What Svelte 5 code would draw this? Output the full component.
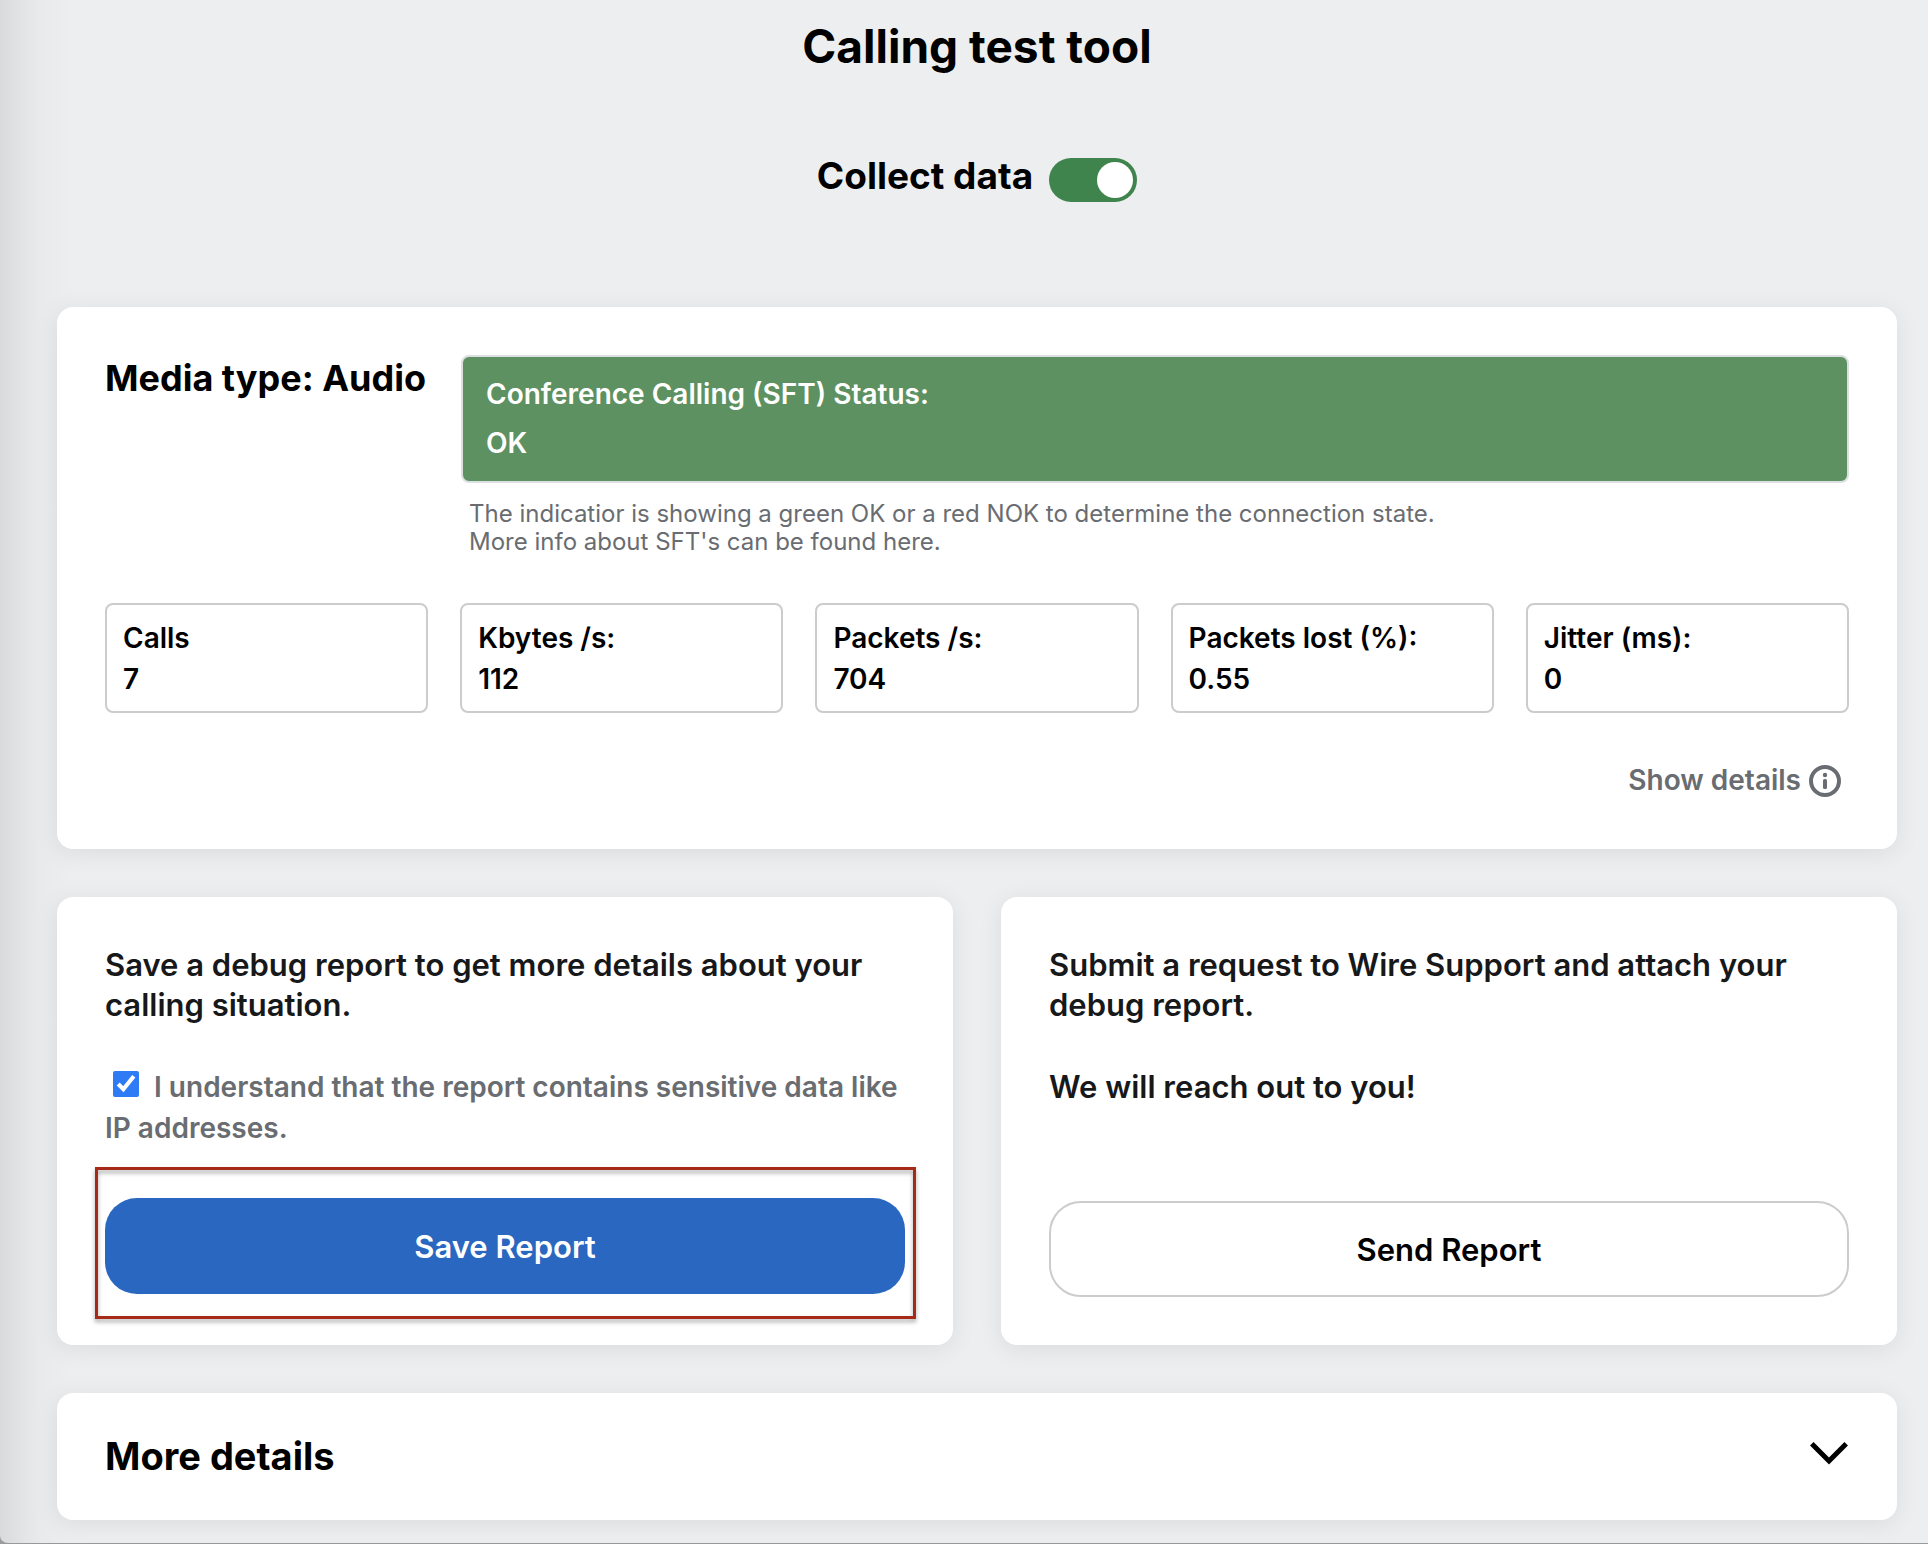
<script lang="ts">
	interface Metric {
		label: string;
		value: string;
	}

	let collecting = $state(true);
	let understood = $state(true);

	const metrics: Metric[] = [
		{ label: 'Calls', value: '7' },
		{ label: 'Kbytes /s:', value: '112' },
		{ label: 'Packets /s:', value: '704' },
		{ label: 'Packets lost (%):', value: '0.55' },
		{ label: 'Jitter (ms):', value: '0' }
	];
</script>

<main class="page">
	<h1>Calling test tool</h1>

	<label class="collect">
		<span>Collect data</span>
		<input class="switch" type="checkbox" role="switch" bind:checked={collecting} />
	</label>

	<section class="card">
		<div class="media">
			<h2>Media type: Audio</h2>
			<div class="media-status">
				<div class="status">
					<div>Conference Calling (SFT) Status:</div>
					<div>OK</div>
				</div>
				<p class="hint">
					The indicatior is showing a green OK or a red NOK to determine the connection state.<br />
					More info about SFT's can be found <a href="#sft">here</a>.
				</p>
			</div>
		</div>

		<div class="metrics">
			{#each metrics as metric}
				<div class="metric">
					<div>{metric.label}</div>
					<div>{metric.value}</div>
				</div>
			{/each}
		</div>

		<button class="show-details" type="button">
			Show details
			<svg width="32" height="32" viewBox="0 0 32 32" aria-hidden="true">
				<circle cx="16" cy="16" r="14" fill="none" stroke="currentColor" stroke-width="4" />
				<circle cx="16" cy="10" r="2.2" fill="currentColor" />
				<rect x="14" y="14" width="4" height="10" rx="1.6" fill="currentColor" />
			</svg>
		</button>
	</section>

	<div class="reports">
		<section class="card report">
			<p class="lead">Save a debug report to get more details about your calling situation.</p>
			<label class="consent">
				<input type="checkbox" bind:checked={understood} />
				I understand that the report contains sensitive data like IP addresses.
			</label>
			<div class="marked">
				<button class="btn primary" type="button">Save Report</button>
			</div>
		</section>

		<section class="card report">
			<p class="lead">Submit a request to Wire Support and attach your debug report.</p>
			<p class="lead">We will reach out to you!</p>
			<button class="btn outline" type="button">Send Report</button>
		</section>
	</div>

	<section class="card more">
		<button class="more-toggle" type="button" aria-expanded="false">
			More details
			<svg width="40" height="24" viewBox="0 0 40 24" aria-hidden="true">
				<path d="M2.8 1.8 L20 19 L37.2 1.8" fill="none" stroke="currentColor" stroke-width="5" />
			</svg>
		</button>
	</section>
</main>

<style>
	:global(html) {
		background: #9b9b9c;
	}

	:global(body) {
		margin: 0;
	}

	.page {
		box-sizing: border-box;
		min-height: 100vh;
		padding: 18px 31px 23px 57px;
		border-bottom: 1px solid #999;
		border-bottom-left-radius: 8px;
		background: linear-gradient(90deg, #d9dadb 0, #e2e3e5 20px, #e9eaec 40px, #edeef0 76px);
		color: #000;
		font-family: Inter, 'Liberation Sans', sans-serif;
		font-size: 28px;
		font-weight: 600;
		line-height: 41px;
	}

	h1,
	h2,
	p {
		margin: 0;
	}

	h1 {
		font-size: 46px;
		font-weight: 700;
		line-height: 56px;
		text-align: center;
	}

	button {
		padding: 0;
		border: none;
		background: none;
		color: inherit;
		font: inherit;
		cursor: pointer;
	}

	.collect {
		display: flex;
		justify-content: center;
		align-items: flex-end;
		gap: 16px;
		margin: 76px 0 105px;
		font-size: 37px;
		font-weight: 700;
		line-height: 52px;
	}

	.switch {
		appearance: none;
		display: flex;
		box-sizing: border-box;
		width: 88px;
		height: 44px;
		margin: 0;
		padding: 4px;
		border-radius: 22px;
		background: #9aa0a6;
		cursor: pointer;
	}

	.switch::before {
		content: '';
		width: 36px;
		height: 36px;
		border-radius: 50%;
		background: #fff;
	}

	.switch:checked {
		justify-content: flex-end;
		background: #3f844c;
	}

	.card {
		padding: 48px;
		border-radius: 16px;
		background: #fff;
		box-shadow: 0 4px 24px rgba(0, 0, 0, 0.08);
	}

	.media {
		display: flex;
		gap: 35px;
	}

	h2 {
		font-size: 36px;
		font-weight: 700;
		line-height: 46px;
		white-space: nowrap;
	}

	.media-status {
		flex: 1;
	}

	.status {
		padding: 13px 23px;
		border: 2px solid #dce0e3;
		border-radius: 8px;
		background: #5d9161;
		color: #fff;
		line-height: 49px;
	}

	.hint {
		margin-top: 17px;
		padding-left: 8px;
		color: #696c70;
		font-size: 24px;
		font-weight: 400;
		line-height: 28px;
	}

	.hint a {
		color: inherit;
		text-decoration: none;
	}

	.metrics {
		display: grid;
		grid-template-columns: repeat(5, 1fr);
		gap: 32px;
		margin-top: 47px;
	}

	.metric {
		padding: 13px 16px 11px;
		border: 2px solid #ccc;
		border-radius: 8px;
	}

	.show-details {
		display: flex;
		align-items: center;
		gap: 8px;
		margin: 47px 8px 0 auto;
		color: #696c70;
	}

	.reports {
		display: grid;
		grid-template-columns: 1fr 1fr;
		gap: 48px;
		margin: 48px 0;
	}

	.report {
		display: flex;
		flex-direction: column;
	}

	.lead {
		margin-bottom: 42px;
		color: #17181a;
		font-size: 31px;
		line-height: 40px;
	}

	.consent {
		color: #696c70;
	}

	.consent input {
		width: 26px;
		height: 26px;
		margin: 0 8px;
		accent-color: #2f7bf6;
	}

	.marked {
		position: relative;
		margin: 49px 0 3px;
	}

	.marked::after {
		content: '';
		position: absolute;
		inset: -31px -11px -25px -10px;
		border: 3px solid #a52a17;
		filter: drop-shadow(0 3px 2px rgba(0, 0, 0, 0.35));
		pointer-events: none;
	}

	.btn {
		display: block;
		box-sizing: border-box;
		width: 100%;
		height: 96px;
		border-radius: 32px;
		font-size: 31px;
	}

	.primary {
		background: #2a67c0;
		color: #fff;
	}

	.outline {
		margin-top: auto;
		border: 2px solid #ccc;
	}

	.more {
		padding: 40px 48px;
	}

	.more-toggle {
		display: flex;
		justify-content: space-between;
		align-items: center;
		width: 100%;
		font-size: 38px;
		font-weight: 700;
		line-height: 47px;
	}

	.more-toggle svg {
		margin-bottom: 6px;
	}
</style>
